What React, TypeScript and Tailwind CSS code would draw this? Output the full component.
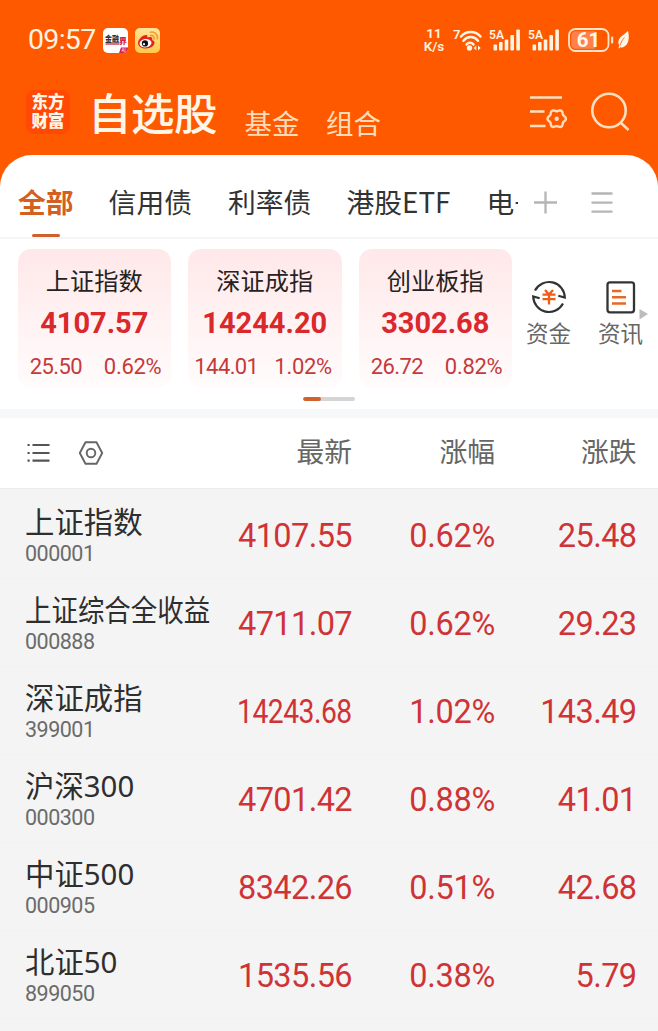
import React from "react";

const indices = [
  { name: "上证指数", value: "4107.57", diff: "25.50", pct: "0.62%" },
  { name: "深证成指", value: "14244.20", diff: "144.01", pct: "1.02%" },
  { name: "创业板指", value: "3302.68", diff: "26.72", pct: "0.82%" },
];

const stocks = [
  { name: "上证指数", code: "000001", last: "4107.55", pct: "0.62%", diff: "25.48" },
  { name: "上证综合全收益", code: "000888", last: "4711.07", pct: "0.62%", diff: "29.23" },
  { name: "深证成指", code: "399001", last: "14243.68", pct: "1.02%", diff: "143.49" },
  { name: "沪深300", code: "000300", last: "4701.42", pct: "0.88%", diff: "41.01" },
  { name: "中证500", code: "000905", last: "8342.26", pct: "0.51%", diff: "42.68" },
  { name: "北证50", code: "899050", last: "1535.56", pct: "0.38%", diff: "5.79" },
];

// Six-lobed gear outline in polar form.
const gearPoints = Array.from({ length: 72 }, (_, i) => {
  const a = (i * Math.PI) / 36;
  const r = 8.3 + 0.9 * Math.cos(6 * a);
  return `${(26.7 + r * Math.cos(a)).toFixed(2)},${(24.7 + r * Math.sin(a)).toFixed(2)}`;
}).join(" ");

function Signal() {
  return (
    <svg width="32" height="24" viewBox="0 0 32 24" fill="#fff3e2" className="overflow-visible">
      <text x="0" y="11" fontSize="13.500" fontWeight="600" textLength="15" lengthAdjust="spacingAndGlyphs">5A</text>
      <rect x="4.500" y="16.500" width="3.600" height="6" rx="1" />
      <rect x="10" y="14" width="3.600" height="8.500" rx="1" />
      <rect x="15.700" y="11.500" width="3.600" height="11" rx="1" />
      <rect x="21.400" y="7" width="3.600" height="15.500" rx="1" />
      <rect x="27.300" y="1.500" width="3.600" height="21" rx="1" />
    </svg>
  );
}

function StatusBar() {
  return (
    <div className="flex h-20 items-center pl-7 pr-7 text-[#fff3e2]">
      <span className="w-[75px] text-[28.5px] leading-none tracking-[-0.7px]">09:57</span>
      <svg width="25" height="25" viewBox="0 0 25 25">
        <rect width="25" height="25" rx="5" fill="#fff" />
        <text x="2" y="14" fontSize="7.500" fontWeight="900" fill="#333" textLength="14" lengthAdjust="spacingAndGlyphs">金融</text>
        <text x="16" y="15.500" fontSize="7.800" fontWeight="900" fill="#d32240">界</text>
        <path d="M2.500 16h14" stroke="#d32240" strokeWidth="1.300" />
        <path d="M16 25l2-5.500h7V20a5 5 0 0 1-5 5z" fill="#d32240" />
        <text x="18.500" y="24" fontSize="4.500" fill="#fff">AI</text>
      </svg>
      <svg className="ml-[6.500px]" width="25" height="25" viewBox="0 0 25 25">
        <defs>
          <linearGradient id="weibo" x1="0" y1="0" x2="0" y2="1">
            <stop offset="0" stopColor="#ffe59a" />
            <stop offset="1" stopColor="#ffc94a" />
          </linearGradient>
        </defs>
        <rect width="25" height="25" rx="5" fill="url(#weibo)" />
        <path d="M3 15c0-3.500 4.500-8 8-8 1.500 0 1.700 1.200 1.300 2.500 2-.900 5.200-1 5 1.500 0 .6-.2 1 .2 1.200 1 .300 2 1 2 2.600 0 3.200-4 5.700-8.500 5.700S3 18.500 3 15z" fill="#e4241b" />
        <ellipse cx="10.500" cy="15.200" rx="6" ry="4.200" fill="#fff" transform="rotate(-8 10.500 15.200)" />
        <circle cx="10" cy="15.400" r="3.100" fill="#15100f" />
        <circle cx="9" cy="16.200" r="1.100" fill="#fff" />
        <path d="M15.500 7.500c2.500-.5 4 1.200 3.500 3.500M15.500 4.200c4.500-.8 7.500 2.300 6.800 6.600" fill="none" stroke="#f29a2e" strokeWidth="1.600" strokeLinecap="round" />
      </svg>
      <div className="ml-auto flex items-center">
        <div className="mr-[7px] flex w-6 flex-col items-center text-[13.500px] font-semibold leading-[13px]">
          <span>11</span>
          <span>K/s</span>
        </div>
        <svg width="30" height="24" viewBox="0 0 30 24" fill="none" stroke="#fff3e2">
          <text x="0" y="10.500" fontSize="13" fontWeight="600" fill="#fff3e2" stroke="none">7</text>
          <path d="M8 8.500c5-6 14.500-6 19.500 0M10.500 12.700c4-4.800 10.500-4.800 14.500 0M13.500 16.500c2-2.500 5-2.500 7 0" strokeWidth="2.500" strokeLinecap="round" />
          <circle cx="16.500" cy="20" r="2.700" fill="#fff3e2" stroke="none" />
          <path d="M23.300 17.500v5L20.600 20zM25 17.500v5l2.700-2.500z" fill="#fff3e2" stroke="none" />
        </svg>
        <span className="ml-[6px]"><Signal /></span>
        <span className="ml-[7px]"><Signal /></span>
        <svg className="ml-[8px]" width="62" height="26" viewBox="0 0 62 26">
          <rect x="1" y="2" width="39.500" height="22" rx="6.500" fill="none" stroke="#ffe3c8" strokeWidth="1.800" />
          <path d="M7.500 4.200H27v17.600H7.500a4.300 4.300 0 0 1-4.300-4.300v-9a4.300 4.300 0 0 1 4.300-4.300z" fill="#ff8048" />
          <text x="20.500" y="20.200" fontSize="20.500" fontWeight="700" textAnchor="middle" fill="#fff6ea">61</text>
          <rect x="43" y="9.500" width="2.200" height="7" rx="1" fill="#ffe3c8" />
          <path d="M60 4c1.500 6 1.500 14-5.500 16.500-1 .3-1.700 0-2.200-.5l-1 1.500-1-.6 1-2C47.800 11.500 54.500 9 60 4z" fill="#fff6ea" />
          <path d="M52 18.500c1-3.500 2.500-6 4.500-8" stroke="#fb5607" strokeWidth=".8" fill="none" />
        </svg>
      </div>
    </div>
  );
}

function Header() {
  return (
    <div className="flex h-[75px] items-start pl-[26px] pr-[27px] text-[#fff6e8]">
      <div className="mt-[10px] flex h-11 w-11 flex-col items-center justify-center rounded-lg bg-[#ff4905] pt-px text-[16.500px] font-black leading-[18.500px]">
        <span>东方</span>
        <span>财富</span>
      </div>
      <span className="ml-[18px] mt-[15px] text-[43.500px] font-medium leading-[42px] tracking-[-0.500px]">自选股</span>
      <span className="ml-[27.500px] mt-[30.500px] text-[27.500px] leading-[28px] text-[#ffdcb8]">基金</span>
      <span className="ml-[26.500px] mt-[30.500px] text-[27.500px] leading-[28px] text-[#ffdcb8]">组合</span>
      <svg className="ml-auto mt-[14px]" width="40" height="38" viewBox="0 0 40 38" fill="none" stroke="#ffdfc0" strokeWidth="2.400">
        <path d="M0 3.500h32M0 17.500h14.500M0 32h15.500" />
        <polygon points={gearPoints} />
        <circle cx="26.700" cy="24.700" r="2.200" fill="#ffdfc0" stroke="none" />
      </svg>
      <svg className="ml-[21px] mt-[12px]" width="40" height="40" viewBox="0 0 40 40" fill="none" stroke="#ffdfc0" strokeWidth="2.600">
        <circle cx="18" cy="18.500" r="16.700" />
        <path d="M29.500 30.500l8 7.500" />
      </svg>
    </div>
  );
}

function Tabs() {
  return (
    <div className="flex h-[83.500px] items-start border-b-2 border-[#f5f5f6] pl-[18px] font-['Noto_Sans_CJK_SC'] text-[27.800px] leading-[30px] text-[#333]">
      <div className="flex flex-col items-center pt-[31px] font-bold text-[#d4601f]">
        <span>全部</span>
        <span className="mt-[18px] h-[3px] w-7 rounded-full bg-[#cf5f2b]" />
      </div>
      <span className="ml-[35px] mt-[31px]">信用债</span>
      <span className="ml-[36px] mt-[31px]">利率债</span>
      <span className="ml-[35px] mt-[31px] whitespace-nowrap">港股ETF</span>
      <span className="ml-[36px] mt-[31px] w-[32px] overflow-hidden whitespace-nowrap">电子</span>
      <svg className="ml-[16px] mt-[36px]" width="24" height="24" viewBox="0 0 24 24" stroke="#b5b5b5" strokeWidth="2.300">
        <path d="M0 11.500h23M11.500 .5v22" />
      </svg>
      <svg className="ml-[33px] mt-[36px]" width="22" height="24" viewBox="0 0 22 24" stroke="#b5b5b5" strokeWidth="2.300">
        <path d="M.5 2.500h21M.5 11.700h21M.5 20.700h21" />
      </svg>
    </div>
  );
}

function IndexCards() {
  return (
    <div className="h-[170.500px] pt-[10.500px]">
      <div className="flex pl-[17.500px]">
        <div className="flex gap-[17px]">
          {indices.map((i) => (
            <div key={i.name} className="flex h-[139px] w-[153.500px] flex-col items-center rounded-[13px] bg-gradient-to-b from-[#ffe8e9] to-[#fffcfc] pt-[20px]">
              <span className="text-[24.200px] leading-[26px] text-[#262223]">{i.name}</span>
              <span className="mt-[13px] text-[29px] font-bold leading-[31px] text-[#d9292c]">{i.value}</span>
              <div className="mt-[16px] grid w-full grid-cols-2 text-center text-[22px] leading-[24px] text-[#c6393b]">
                <span className="tracking-[-0.600px]">{i.diff}</span>
                <span className="tracking-[-0.300px]">{i.pct}</span>
              </div>
            </div>
          ))}
        </div>
        <div className="ml-[14px] flex w-[45px] flex-col items-center pt-[30px] text-[22.500px] leading-[26px] text-[#666]">
          <svg width="36" height="36" viewBox="0 0 36 36" fill="none" stroke="#333" strokeWidth="2.200">
            <path d="M4 11.500A15.800 15.800 0 0 1 33.800 18.500l-6.500-1.700M32 24.500A15.800 15.800 0 0 1 2.200 17.500l6.500 1.700" />
            <path d="M14 11l4 4.500 4-4.500M11.500 15.700h13M11.500 20.200h13M18 15.500v10" stroke="#ee5c15" strokeWidth="2.300" />
          </svg>
          <span className="mt-[6px] whitespace-nowrap">资金</span>
        </div>
        <div className="ml-[27px] flex w-[45px] flex-col items-center pt-[30px] text-[22.500px] leading-[26px] text-[#666]">
          <svg width="46" height="36" viewBox="0 0 46 36" fill="none" stroke="#333" strokeWidth="2.300" className="overflow-visible">
            <rect x="9.500" y="3.300" width="26.500" height="30" rx="2.500" />
            <path d="M14 12h9.500M14 18.300h14M14 24.500h14" stroke="#e56a25" strokeWidth="2.400" />
            <path d="M41.500 30l8.500 5-8.500 5.500z" fill="#bdbdbd" stroke="none" />
          </svg>
          <span className="mt-[6px] whitespace-nowrap">资讯</span>
        </div>
      </div>
      <div className="mx-auto mt-[9px] flex h-[3.500px] w-[52px] overflow-hidden rounded-full bg-[#d5d5d8]">
        <div className="w-[18px] rounded-full bg-[#d1622a]" />
      </div>
    </div>
  );
}

function TableHead() {
  return (
    <div className="grid h-[70px] grid-cols-[352px_143px_141.500px] text-right text-[27.800px] leading-[70px] text-[#666]">
      <div className="flex items-center pl-[27px]">
        <svg width="24" height="22" viewBox="0 0 24 22" stroke="#555" strokeWidth="2.200">
          <path d="M5.500 3h17M5.500 11h17M5.500 18.700h17M.500 3h2.200M.500 11h2.200M.500 18.700h2.200" />
        </svg>
        <svg className="ml-[27px]" width="26" height="26" viewBox="0 0 26 26" fill="none" stroke="#666" strokeWidth="1.900" strokeLinejoin="round">
          <path d="M7.500 2.300h11L24.200 13l-5.700 10.700h-11L1.800 13z" />
          <circle cx="13" cy="13" r="4.300" />
        </svg>
        <span className="ml-auto">最新</span>
      </div>
      <span>涨幅</span>
      <span>涨跌</span>
    </div>
  );
}

function StockRow({ s }: { s: (typeof stocks)[number] }) {
  // Long names and prices are condensed horizontally to stay inside their column.
  const nameFit = s.name.length > 6 ? "scale-x-[0.900]" : "";
  const lastFit = s.last.length > 7 ? "scale-x-[0.870]" : "";
  return (
    <div className="grid h-[88px] grid-cols-[212px_140px_143px_141.500px] border-b border-[#f1f1f1] text-right text-[32.500px] leading-[91px] tracking-[-0.600px] text-[#cf3336]">
      <div className="flex flex-col items-start pl-[25px] pt-[14.500px] text-left">
        <span className={`origin-left whitespace-nowrap font-['Noto_Sans','Noto_Sans_CJK_SC'] text-[29.400px] leading-[32px] tracking-normal text-[#2e2e2e] ${nameFit}`}>{s.name}</span>
        <span className="mt-[4px] text-[21.500px] leading-[24px] tracking-[-0.500px] text-[#6b6b6b]">{s.code}</span>
      </div>
      <span className={`origin-right justify-self-end ${lastFit}`}>{s.last}</span>
      <span className="tracking-[-0.300px]">{s.pct}</span>
      <span>{s.diff}</span>
    </div>
  );
}

export default function App() {
  return (
    <div className="flex h-[1031px] w-[658px] flex-col overflow-hidden bg-[#ff5900] font-[Roboto,'Noto_Sans_CJK_SC',sans-serif]">
      <StatusBar />
      <Header />
      <div className="flex flex-1 flex-col overflow-hidden rounded-t-[32px] bg-white">
        <Tabs />
        <IndexCards />
        <div className="h-[9px] shrink-0 bg-[#f7f8fa]" />
        <TableHead />
        <div className="flex-1 border-t border-[#ececec] bg-[#f4f4f4] pt-[2px]">
          {stocks.map((s) => (
            <StockRow key={s.code} s={s} />
          ))}
        </div>
      </div>
    </div>
  );
}
